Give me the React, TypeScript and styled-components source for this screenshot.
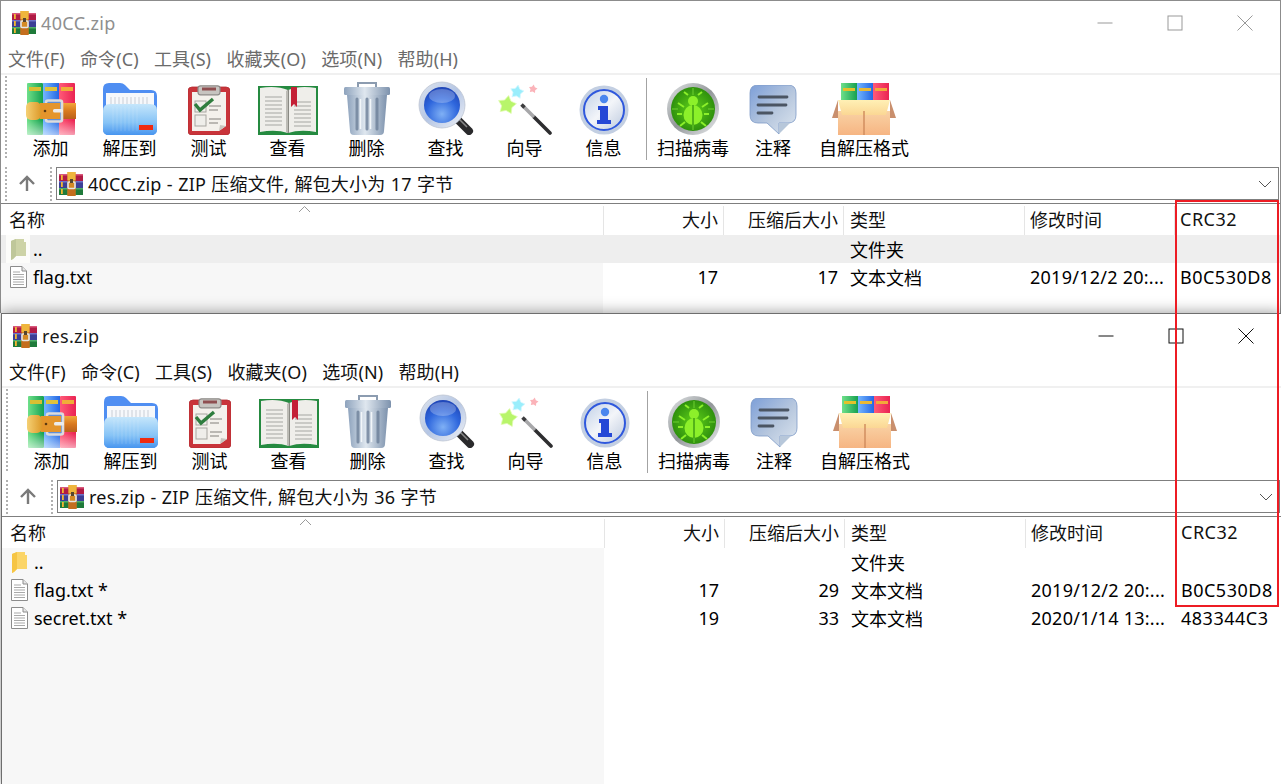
import React from "react";
import styled, { createGlobalStyle } from "styled-components";

const Global = createGlobalStyle`
  html, body { margin: 0; padding: 0; background: #fff; overflow: hidden; }
  * { box-sizing: border-box; }
`;

const FONT = `"Noto Sans", "Noto Sans CJK SC", sans-serif`;

const Desktop = styled.div`
  position: relative;
  width: 1281px;
  height: 784px;
  display: flex;
  flex-direction: column;
  overflow: hidden;
  font-family: ${FONT};
  font-size: 18px;
  color: #000;
`;
const WindowFrame = styled.section<{ $back?: boolean }>`
  width: 1281px;
  display: flex;
  flex-direction: column;
  background: #fff;
  overflow: hidden;
  flex: ${(p) => (p.$back ? "0 0 313px" : "1 1 auto")};
  border-top: 1px solid ${(p) => (p.$back ? "#8c8c8c" : "#6e6e6e")};
  border-left: 1px solid ${(p) => (p.$back ? "#8c8c8c" : "#6e6e6e")};
  border-right: 1px solid ${(p) => (p.$back ? "#8c8c8c" : "#6e6e6e")};
  margin-left: ${(p) => (p.$back ? "0" : "1px")};
  position: relative;
  box-shadow: ${(p) => (p.$back ? "none" : "0 0 14px rgba(0,0,0,.42)")};
`;
const TitleBar = styled.header`
  height: 44px;
  flex: none;
  display: flex;
  align-items: center;
  padding-left: 11px;
`;
const TitleText = styled.span<{ $back?: boolean }>`
  margin-left: 4px;
  margin-top: -1px;
  font-size: 18px;
  letter-spacing: 0.35px;
  color: ${(p) => (p.$back ? "#8f8f8f" : "#1a1a1a")};
`;
const Controls = styled.div`
  margin-left: auto;
  display: flex;
`;
const ControlButton = styled.div`
  width: 70px;
  height: 44px;
  display: flex;
  align-items: center;
  justify-content: center;
`;
const MenuBar = styled.nav<{ $back?: boolean }>`
  height: 28px;
  flex: none;
  display: flex;
  align-items: center;
  gap: 15.3px;
  padding-left: 7px;
  color: ${(p) => (p.$back ? "#6b6b6b" : "#111")};
`;
const MenuItem = styled.span`
  font-size: 18px;
  line-height: 28px;
  white-space: nowrap;
  letter-spacing: 0.1px;
`;
const Divider = styled.div`
  height: 2px;
  flex: none;
  background: #f0f0f0;
`;
const Toolbar = styled.div`
  height: 88px;
  flex: none;
  display: flex;
  align-items: flex-start;
  padding-top: 8px;
`;
const Grip = styled.i<{ $left: number; $right: number }>`
  display: block;
  width: 2px;
  align-self: stretch;
  margin: 0 ${(p) => p.$right}px 0 ${(p) => p.$left}px;
  background: repeating-linear-gradient(to bottom, #b0b0b0 0 2px, transparent 2px 4px);
`;
const ToolGrip = styled(Grip)`
  margin-top: -7px;
  margin-bottom: 3px;
`;
const ToolButton = styled.div<{ $w: number }>`
  width: ${(p) => p.$w}px;
  flex: none;
  display: flex;
  flex-direction: column;
  align-items: center;
`;
const IconSlot = styled.div`
  height: 52px;
  display: flex;
  align-items: flex-end;
  justify-content: center;
`;
const ToolLabel = styled.span`
  font-size: 18px;
  line-height: 26px;
  margin-top: -0.5px;
  white-space: nowrap;
`;
const ToolSeparator = styled.i`
  display: block;
  flex: none;
  width: 1px;
  height: 82px;
  margin: -5px 1px 0 3px;
  background: #a3a3a3;
`;
const AddressBar = styled.div`
  height: 40px;
  flex: none;
  display: flex;
  align-items: flex-start;
  padding-top: 4px;
`;
const UpSlot = styled.div`
  width: 40px;
  height: 33px;
  display: flex;
  align-items: center;
  justify-content: center;
`;
const AddressField = styled.div`
  flex: 1;
  height: 33px;
  margin-right: 1px;
  border: 1px solid #7f7f7f;
  display: flex;
  align-items: center;
  padding-left: 2px;
  background: #fff;
`;
const AddressText = styled.span`
  margin-left: 4px;
  margin-top: -2px;
  font-size: 18px;
  white-space: nowrap;
  letter-spacing: 0.2px;
  word-spacing: 0.4px;
  color: #111;
`;
const Chevron = styled.svg`
  margin-left: auto;
  margin-right: 6px;
`;
const ListFrame = styled.div`
  flex: 1;
  min-height: 0;
  display: flex;
  flex-direction: column;
  border-top: 1px solid #7f7f7f;
`;
const COLS = "603px 120px 120px 181px 150px 1fr";
const ListHeader = styled.div`
  height: 31px;
  flex: none;
  display: grid;
  grid-template-columns: ${COLS};
  position: relative;
`;
const HeadCell = styled.div<{ $right?: boolean; $pad?: number; $track?: number }>`
  display: flex;
  align-items: center;
  justify-content: ${(p) => (p.$right ? "flex-end" : "flex-start")};
  padding: ${(p) => (p.$right ? "0 5px 3px 0" : `0 0 3px ${p.$pad ?? 5}px`)};
  letter-spacing: ${(p) => p.$track ?? 0}px;
  border-right: 1px solid #e5e5e5;
  margin-top: 2px;
  color: #111;
  &:last-of-type { border-right: 0; }
`;
const SortCaret = styled.svg`
  position: absolute;
  left: 297px;
  top: 1px;
`;
const ListBody = styled.div`
  flex: 1;
  min-height: 0;
  padding-left: 1px;
  background: linear-gradient(to right, #f7f7f7 602px, #fff 602px);
`;
const Row = styled.div<{ $hi?: boolean }>`
  height: 28px;
  margin-left: -1px;
  display: grid;
  grid-template-columns: ${COLS};
  align-items: center;
  background: ${(p) => (p.$hi ? "#eeeeee" : "transparent")};
`;
const NameCell = styled.div`
  display: flex;
  align-items: center;
  height: 28px;
  padding-left: 7px;
`;
const IconBox = styled.span<{ $white?: boolean }>`
  width: 24px;
  height: 28px;
  margin-left: -2px;
  display: flex;
  align-items: center;
  justify-content: center;
  background: ${(p) => (p.$white ? "#fcfcfa" : "transparent")};
`;
const NameText = styled.span`
  margin-left: 3px;
  white-space: nowrap;
`;
const NumCell = styled.div`
  text-align: right;
  padding-right: 6px;
`;
const TextCell = styled.div<{ $pad: number; $track?: number }>`
  padding-left: ${(p) => p.$pad}px;
  letter-spacing: ${(p) => p.$track ?? 0}px;
  white-space: nowrap;
`;
const RedBox = styled.div`
  position: absolute;
  left: 1175px;
  top: 200px;
  width: 104px;
  height: 407px;
  border: 2px solid #ed1c24;
  pointer-events: none;
`;

/* ---------- icons ---------- */
const SmallRar = () => (
  <svg width="25" height="24" viewBox="0 0 25 24">
    <rect x="0" y="2" width="24" height="7" fill="#b01b45" />
    <rect x="0" y="9" width="24" height="7" fill="#3c3f96" />
    <rect x="0" y="16" width="24" height="7" fill="#1f7a3a" />
    <rect x="0" y="2" width="24" height="1.5" fill="#d9597c" />
    <rect x="0" y="9" width="24" height="1.5" fill="#6e73c8" />
    <rect x="0" y="16" width="24" height="1.5" fill="#4fae69" />
    <rect x="2" y="3" width="1.8" height="5" fill="#f2b632" />
    <rect x="2" y="10" width="1.8" height="5" fill="#f2b632" />
    <rect x="2" y="17" width="1.8" height="5" fill="#f2b632" />
    <rect x="8.5" y="0" width="8" height="24" fill="#d58a25" />
    <rect x="8.5" y="0" width="8" height="8" fill="#efb53c" />
    <rect x="8.5" y="16" width="8" height="8" fill="#c46e1e" />
    <rect x="9" y="10" width="7" height="6.5" rx="1" fill="none" stroke="#e6e6e6" strokeWidth="1.6" />
    <rect x="11" y="7" width="3" height="4" fill="#55452f" />
  </svg>
);

const BigRar = () => (
  <svg width="50" height="52" viewBox="0 0 50 52">
    <defs>
      <linearGradient id="rg" x1="0" x2="1" y1="0" y2="0"><stop offset="0" stopColor="#6fe08a" /><stop offset="1" stopColor="#16a050" /></linearGradient>
      <linearGradient id="rb" x1="0" x2="1" y1="0" y2="0"><stop offset="0" stopColor="#74b6ff" /><stop offset="1" stopColor="#2467e4" /></linearGradient>
      <linearGradient id="rr" x1="0" x2="1" y1="0" y2="0"><stop offset="0" stopColor="#ff5a78" /><stop offset="1" stopColor="#ea2352" /></linearGradient>
      <linearGradient id="rfade" x1="0" x2="0" y1="0" y2="1"><stop offset="0.72" stopColor="#fff" stopOpacity="0" /><stop offset="1" stopColor="#fff" stopOpacity=".55" /></linearGradient>
      <linearGradient id="belt" x1="0" x2="0" y1="0" y2="1"><stop offset="0" stopColor="#f2a73b" /><stop offset=".5" stopColor="#d9791e" /><stop offset="1" stopColor="#b9601a" /></linearGradient>
      <linearGradient id="flap" x1="0" x2="1" y1="0" y2="0"><stop offset="0" stopColor="#f5d074" /><stop offset="1" stopColor="#dd9a2a" /></linearGradient>
    </defs>
    <rect x="1" y="0" width="16" height="52" rx="1" fill="url(#rg)" />
    <rect x="17" y="0" width="16" height="52" fill="url(#rb)" />
    <rect x="33" y="0" width="16" height="52" rx="1" fill="url(#rr)" />
    <rect x="1" y="0" width="48" height="52" fill="url(#rfade)" />
    <rect x="3" y="4" width="12" height="4" fill="#d8bf33" />
    <rect x="19" y="4" width="12" height="4" fill="#dfc23c" />
    <rect x="35" y="4" width="12" height="4" fill="#f0ad38" />
    <rect x="36" y="20" width="14" height="16" fill="url(#belt)" />
    <rect x="20" y="17.500" width="16" height="21" rx="2" fill="#5f8fd8" stroke="#dcdcdc" strokeWidth="2.6" />
    <rect x="14" y="20" width="20" height="16" fill="#e4952c" />
    <rect x="0" y="19" width="15" height="18" rx="5" fill="url(#flap)" />
    <circle cx="19" cy="28" r="1.3" fill="#5d3a10" />
    <rect x="27" y="26" width="10" height="3.5" rx="1.5" fill="#ececec" />
  </svg>
);

const FolderIcon = () => (
  <svg width="54" height="52" viewBox="0 0 54 52">
    <defs>
      <linearGradient id="ff" x1="0" x2="0" y1="0" y2="1"><stop offset="0" stopColor="#c5e6fb" /><stop offset=".6" stopColor="#86c3f6" /><stop offset="1" stopColor="#4795ef" /></linearGradient>
    </defs>
    <path d="M6 0H17Q20 0 22 2L27 7H48Q54 7 54 13V46Q54 52 48 52H6Q0 52 0 46V6Q0 0 6 0Z" fill="#4f8ef2" />
    <rect x="3" y="10" width="48" height="22" fill="#f6f8fb" />
    <path d="M8 14V24M12 14V24M16 14V24M20 14V24M24 14V24M28 14V24M32 14V24M36 14V24M40 14V24M44 14V24" stroke="#c9ced6" strokeWidth="1" />
    <path d="M0 28Q0 21 7 21L47 21Q54 21 54 27V46Q54 52 48 52H6Q0 52 0 46Z" fill="url(#ff)" />
    <path d="M10 24V48M14 24V48M18 24V48M22 24V48M26 24V48M30 24V48M34 24V48" stroke="#fff" strokeOpacity=".14" strokeWidth="1" />
    <rect x="36" y="42" width="14" height="5" fill="#ef2b10" />
  </svg>
);

const ClipboardIcon = () => (
  <svg width="42" height="50" viewBox="0 0 42 50">
    <rect x="0" y="2" width="42" height="48" rx="4" fill="#c9343a" />
    <rect x="0" y="2" width="42" height="48" rx="4" fill="none" stroke="#b42d33" strokeWidth=".8" />
    <path d="M4 7H38V41L31 46H4Z" fill="#f4f1ec" />
    <path d="M38 41L31 46L32 40Z" fill="#c9c6c0" />
    <rect x="10" y="0.8" width="22" height="9" rx="2.5" fill="#c7c4c0" stroke="#8d8a88" strokeWidth="1.2" />
    <rect x="14" y="2.5" width="14" height="3" fill="#8f4e50" />
    <rect x="7" y="16" width="11" height="11" fill="#efeeea" stroke="#a7a6a0" />
    <rect x="7" y="30" width="11" height="11" fill="#efeeea" stroke="#a7a6a0" />
    <path d="M7 19L12 25L25 14" fill="none" stroke="#2f7d3e" strokeWidth="3.4" />
    <path d="M21 21H33M21 25H30M21 34H33M21 38H30" stroke="#a8a5a0" strokeWidth="1.4" />
  </svg>
);

const BookIcon = () => (
  <svg width="60" height="50" viewBox="0 0 60 50">
    <path d="M0 1H60V50H0Z" fill="#258a40" />
    <path d="M2 3Q18 0 30 5Q42 0 58 3V47Q42 44 30 48Q18 44 2 47Z" fill="#efeeea" />
    <path d="M30 5V48" stroke="#8a8a84" strokeWidth="2" />
    <path d="M28 6V47L30 48V5Z" fill="#bdbcb6" />
    <path d="M7 12H24M7 16H24M7 20H24M7 24H24M7 28H24M7 32H24M7 36H24M7 40H24M36 17H53M36 21H53M36 25H53M36 29H53M36 33H53M36 37H53M36 41H53" stroke="#bfbfba" strokeWidth="1.5" />
    <path d="M33 2H39V22L36 19L33 22Z" fill="#c42036" />
  </svg>
);

const TrashIcon = () => (
  <svg width="46" height="54" viewBox="0 0 46 54">
    <defs>
      <linearGradient id="tb" x1="0" x2="1" y1="0" y2="0"><stop offset="0" stopColor="#8ea3bd" /><stop offset=".45" stopColor="#dfe7ef" /><stop offset="1" stopColor="#7d92ad" /></linearGradient>
    </defs>
    <path d="M14 7V2H32V7" fill="none" stroke="#8c9cb0" strokeWidth="2" />
    <rect x="0" y="6" width="46" height="8" rx="1.5" fill="url(#tb)" />
    <path d="M3 14H43L40 50Q40 54 36 54H10Q6 54 6 50Z" fill="url(#tb)" />
    <path d="M13 18V48M23 18V48M33 18V48" stroke="#6d8099" strokeWidth="3" strokeLinecap="round" strokeOpacity=".8" />
    <path d="M16.5 18V48M26.5 18V48" stroke="#f2f6f9" strokeWidth="1.5" />
  </svg>
);

const SearchIcon = () => (
  <svg width="57" height="54" viewBox="-2 0 57 54">
    <defs>
      <radialGradient id="ln" cx=".5" cy=".75" r=".8"><stop offset="0" stopColor="#7fb0f5" /><stop offset=".55" stopColor="#2f67dd" /><stop offset="1" stopColor="#1c3fb0" /></radialGradient>
      <linearGradient id="rm" x1="0" x2="1" y1="0" y2="1"><stop offset="0" stopColor="#dfe5ee" /><stop offset=".5" stopColor="#b5c6e4" /><stop offset="1" stopColor="#f0f2f7" /></linearGradient>
    </defs>
    <path d="M37 37L50 50" stroke="#2a2a2c" strokeWidth="8" strokeLinecap="round" />
    <path d="M38 36L48 46" stroke="#888" strokeWidth="1.6" />
    <circle cx="23" cy="24" r="23" fill="url(#rm)" stroke="#bcc4d2" strokeWidth=".8" />
    <circle cx="23" cy="24" r="18" fill="url(#ln)" />
    <ellipse cx="23" cy="15" rx="13" ry="7" fill="#fff" fillOpacity=".25" />
  </svg>
);

const star = (cx: number, cy: number, R: number, r: number) => {
  const pts: string[] = [];
  for (let i = 0; i < 10; i++) {
    const a = (-90 + i * 36 + 10) * (Math.PI / 180);
    const d = i % 2 ? r : R;
    pts.push(`${(cx + d * Math.cos(a)).toFixed(1)},${(cy + d * Math.sin(a)).toFixed(1)}`);
  }
  return pts.join(" ");
};
const WandIcon = () => (
  <svg width="54" height="54" viewBox="0 0 54 54">
    <path d="M36 36L52 52" stroke="#2e2e30" strokeWidth="3.6" strokeLinecap="round" />
    <path d="M25 25L36 36" stroke="#a7a7a9" strokeWidth="3.6" />
    <path d="M23.500 23.500L26.500 26.500" stroke="#3c3c3e" strokeWidth="3.6" />
    <polygon points={star(9, 24, 9.5, 5.5)} fill="#b8f56a" stroke="#e2fbb4" strokeWidth=".8" />
    <polygon points={star(19, 11, 7, 4)} fill="#9aeefc" stroke="#d6f8ff" strokeWidth=".8" />
    <polygon points={star(35, 8, 4.5, 2.5)} fill="#fbb3b9" />
  </svg>
);

const InfoIcon = () => (
  <svg width="50" height="50" viewBox="0 0 50 50">
    <defs>
      <linearGradient id="ii" x1="0" x2="1" y1="0" y2="1"><stop offset="0" stopColor="#bfcfe6" /><stop offset=".5" stopColor="#f3f5f9" /><stop offset="1" stopColor="#bcc9de" /></linearGradient>
    </defs>
    <circle cx="25" cy="25" r="24.5" fill="#c3cfe2" />
    <circle cx="25" cy="25" r="20" fill="url(#ii)" stroke="#2f58dd" strokeWidth="2" />
    <circle cx="25" cy="14" r="4.2" fill="#4a86ee" />
    <path d="M19 21H29V35H32V39H18V35H21V25H19Z" fill="#2548d6" />
  </svg>
);

const BugIcon = () => (
  <svg width="52" height="52" viewBox="0 0 52 52">
    <defs>
      <linearGradient id="bs" x1="0" x2="1" y1="0" y2="1"><stop offset="0" stopColor="#e3e6e8" /><stop offset=".5" stopColor="#93979a" /><stop offset="1" stopColor="#eceef0" /></linearGradient>
      <radialGradient id="bg" cx=".5" cy=".5" r=".55"><stop offset="0" stopColor="#5fd01a" /><stop offset="1" stopColor="#2a8a0c" /></radialGradient>
    </defs>
    <circle cx="26" cy="26" r="26" fill="url(#bs)" />
    <circle cx="26" cy="26" r="22" fill="url(#bg)" />
    <path d="M26 5V12M26 40V47M5 26H11M41 26H47" stroke="#6fd030" strokeWidth="1" />
    <ellipse cx="26" cy="32" rx="9.5" ry="10" fill="#8cf02a" />
    <circle cx="26" cy="18" r="5" fill="#8cf02a" />
    <path d="M21 12L17 9M31 12L35 9M17 24L11 20M35 24L41 20M15 31H10M37 31H42M18 39L13 43M34 39L39 43" stroke="#8cf02a" strokeWidth="2" />
    <path d="M26 22V42" stroke="#2e8a10" strokeWidth="1.2" />
  </svg>
);

const CommentIcon = () => (
  <svg width="48" height="50" viewBox="0 0 48 50">
    <defs>
      <linearGradient id="cm" x1="0" x2="1" y1="0" y2="1"><stop offset="0" stopColor="#7d9fd8" /><stop offset=".55" stopColor="#b8c8de" /><stop offset="1" stopColor="#dde6f0" /></linearGradient>
    </defs>
    <path d="M9 0H39Q47 0 47 8V30Q47 38 39 38H30V49L18 38H9Q1 38 1 30V8Q1 0 9 0Z" fill="url(#cm)" stroke="#7e9ac6" strokeWidth=".8" />
    <path d="M30 38V49L41 38Z" fill="#b7c7da" />
    <path d="M10 12H38M9 20H37M9 28H23" stroke="#4b5563" strokeWidth="2.8" strokeLinecap="round" />
  </svg>
);

const BoxIcon = () => (
  <svg width="64" height="52" viewBox="0 0 64 52">
    <defs>
      <linearGradient id="bx" x1="0" x2="0" y1="0" y2="1"><stop offset="0" stopColor="#f9d2a4" /><stop offset="1" stopColor="#f6b583" /></linearGradient>
      <linearGradient id="bf" x1="0" x2="0" y1="0" y2="1"><stop offset="0" stopColor="#fff0b5" /><stop offset="1" stopColor="#fbd794" /></linearGradient>
      <linearGradient id="xg" x1="0" x2="1" y1="0" y2="0"><stop offset="0" stopColor="#6fe08a" /><stop offset="1" stopColor="#16a050" /></linearGradient>
      <linearGradient id="xb" x1="0" x2="1" y1="0" y2="0"><stop offset="0" stopColor="#74b6ff" /><stop offset="1" stopColor="#2467e4" /></linearGradient>
      <linearGradient id="xr" x1="0" x2="1" y1="0" y2="0"><stop offset="0" stopColor="#ff5a78" /><stop offset="1" stopColor="#ea2352" /></linearGradient>
    </defs>
    <rect x="9" y="0" width="16" height="20" fill="url(#xg)" />
    <rect x="25" y="0" width="16" height="20" fill="url(#xb)" />
    <rect x="41" y="0" width="16" height="20" fill="url(#xr)" />
    <rect x="11" y="5" width="12" height="3" fill="#e4c12a" />
    <rect x="27" y="5" width="12" height="3" fill="#e9b936" />
    <rect x="43" y="5" width="12" height="3" fill="#f2a93a" />
    <path d="M6 17L0 35H6Z" fill="#c98f6d" />
    <path d="M58 17L64 35H58Z" fill="#c98f6d" />
    <rect x="6" y="28" width="52" height="24" fill="url(#bx)" />
    <path d="M6 17H58L54 32H10Z" fill="url(#bf)" />
    <path d="M32 28V52" stroke="#cf8a5c" strokeWidth="1.4" />
  </svg>
);

const TextFileIcon = () => (
  <svg width="17" height="22" viewBox="0 0 17 22">
    <path d="M.5.5H12L16.5 5V21.5H.5Z" fill="#fff" stroke="#8c8c8c" />
    <path d="M12 .5V5H16.5" fill="#e8e8e8" stroke="#8c8c8c" />
    <path d="M3 6H10M3 8.5H14M3 11H14M3 13.5H14M3 16H14M3 18.5H14" stroke="#a9a9a9" />
  </svg>
);

const UpFolder = ({ pale }: { pale?: boolean }) => (
  <svg width="15" height="21" viewBox="0 0 15 21">
    <path d="M0 2L5 0H13V3L15 3V17H5L2 20L0 21Z" fill={pale ? "#cdd3a7" : "#fbd568"} />
    <path d="M0 2L5 0V17L2 20L0 21Z" fill={pale ? "#bfc79a" : "#f6c544"} />
  </svg>
);

const MinIcon = ({ c }: { c: string }) => (
  <svg width="16" height="16" viewBox="0 0 16 16"><path d="M0.5 8H15.5" stroke={c} /></svg>
);
const MaxIcon = ({ c }: { c: string }) => (
  <svg width="16" height="16" viewBox="0 0 16 16"><rect x="1" y="1" width="14" height="14" fill="none" stroke={c} /></svg>
);
const CloseIcon = ({ c }: { c: string }) => (
  <svg width="16" height="16" viewBox="0 0 16 16"><path d="M.5.5L15.5 15.5M15.5.5L.5 15.5" stroke={c} /></svg>
);
const UpArrow = () => (
  <svg width="18" height="17" viewBox="0 0 18 17">
    <path d="M9 16V2M2 9L9 2L16 9" fill="none" stroke="#7a7a7a" strokeWidth="2.4" />
  </svg>
);

/* ---------- data ---------- */
const MENUS = ["文件(F)", "命令(C)", "工具(S)", "收藏夹(O)", "选项(N)", "帮助(H)"];
const TOOLS_A: [string, React.ReactNode][] = [
  ["添加", <BigRar />], ["解压到", <FolderIcon />], ["测试", <ClipboardIcon />], ["查看", <BookIcon />],
  ["删除", <TrashIcon />], ["查找", <SearchIcon />], ["向导", <WandIcon />], ["信息", <InfoIcon />],
];
const TOOLS_B: [string, React.ReactNode, number][] = [
  ["扫描病毒", <BugIcon />, 90], ["注释", <CommentIcon />, 70], ["自解压格式", <BoxIcon />, 112],
];
type FileRow = { name: string; size: string; packed: string; date: string; crc: string };

const Win = ({ title, addr, files, back }: { title: string; addr: string; files: FileRow[]; back?: boolean }) => {
  const c = back ? "#999" : "#111";
  return (
    <WindowFrame $back={back}>
      <TitleBar>
        <SmallRar />
        <TitleText $back={back}>{title}</TitleText>
        <Controls>
          <ControlButton><MinIcon c={c} /></ControlButton>
          <ControlButton><MaxIcon c={c} /></ControlButton>
          <ControlButton><CloseIcon c={c} /></ControlButton>
        </Controls>
      </TitleBar>
      <MenuBar $back={back}>
        {MENUS.map((m) => <MenuItem key={m}>{m}</MenuItem>)}
      </MenuBar>
      <Divider />
      <Toolbar>
        <ToolGrip $left={4} $right={4} />
        {TOOLS_A.map(([l, i]) => (
          <ToolButton key={l} $w={79}><IconSlot>{i}</IconSlot><ToolLabel>{l}</ToolLabel></ToolButton>
        ))}
        <ToolSeparator />
        {TOOLS_B.map(([l, i, w]) => (
          <ToolButton key={l} $w={w}><IconSlot>{i}</IconSlot><ToolLabel>{l}</ToolLabel></ToolButton>
        ))}
      </Toolbar>
      <AddressBar>
        <Grip $left={4} $right={0} />
        <UpSlot><UpArrow /></UpSlot>
        <Grip $left={3} $right={4} />
        <AddressField>
          <SmallRar />
          <AddressText>{addr}</AddressText>
          <Chevron width="14" height="8" viewBox="0 0 14 8"><path d="M1 1L7 7L13 1" fill="none" stroke="#555" /></Chevron>
        </AddressField>
      </AddressBar>
      <ListFrame>
        <ListHeader>
          <HeadCell $pad={8}>名称</HeadCell>
          <HeadCell $right>大小</HeadCell>
          <HeadCell $right>压缩后大小</HeadCell>
          <HeadCell $pad={6}>类型</HeadCell>
          <HeadCell $pad={5}>修改时间</HeadCell>
          <HeadCell $pad={5} $track={0.5}>CRC32</HeadCell>
          <SortCaret width="13" height="8" viewBox="0 0 13 8"><path d="M1 7L6.500 1.500L12 7" fill="none" stroke="#9a9a9a" /></SortCaret>
        </ListHeader>
        <ListBody>
          <Row $hi={back}>
            <NameCell>
              <IconBox $white={back}><UpFolder pale={back} /></IconBox>
              <NameText>..</NameText>
            </NameCell>
            <NumCell /><NumCell />
            <TextCell $pad={6}>文件夹</TextCell>
            <TextCell $pad={5} /><TextCell $pad={5} />
          </Row>
          {files.map((f) => (
            <Row key={f.name}>
              <NameCell>
                <IconBox><TextFileIcon /></IconBox>
                <NameText>{f.name}</NameText>
              </NameCell>
              <NumCell>{f.size}</NumCell>
              <NumCell>{f.packed}</NumCell>
              <TextCell $pad={6}>文本文档</TextCell>
              <TextCell $pad={5} $track={0.25}>{f.date}</TextCell>
              <TextCell $pad={5} $track={0.5}>{f.crc}</TextCell>
            </Row>
          ))}
        </ListBody>
      </ListFrame>
    </WindowFrame>
  );
};

export default function App() {
  return (
    <Desktop>
      <Global />
      <Win
        back
        title="40CC.zip"
        addr="40CC.zip - ZIP 压缩文件, 解包大小为 17 字节"
        files={[{ name: "flag.txt", size: "17", packed: "17", date: "2019/12/2 20:...", crc: "B0C530D8" }]}
      />
      <Win
        title="res.zip"
        addr="res.zip - ZIP 压缩文件, 解包大小为 36 字节"
        files={[
          { name: "flag.txt *", size: "17", packed: "29", date: "2019/12/2 20:...", crc: "B0C530D8" },
          { name: "secret.txt *", size: "19", packed: "33", date: "2020/1/14 13:...", crc: "483344C3" },
        ]}
      />
      <RedBox />
    </Desktop>
  );
}
